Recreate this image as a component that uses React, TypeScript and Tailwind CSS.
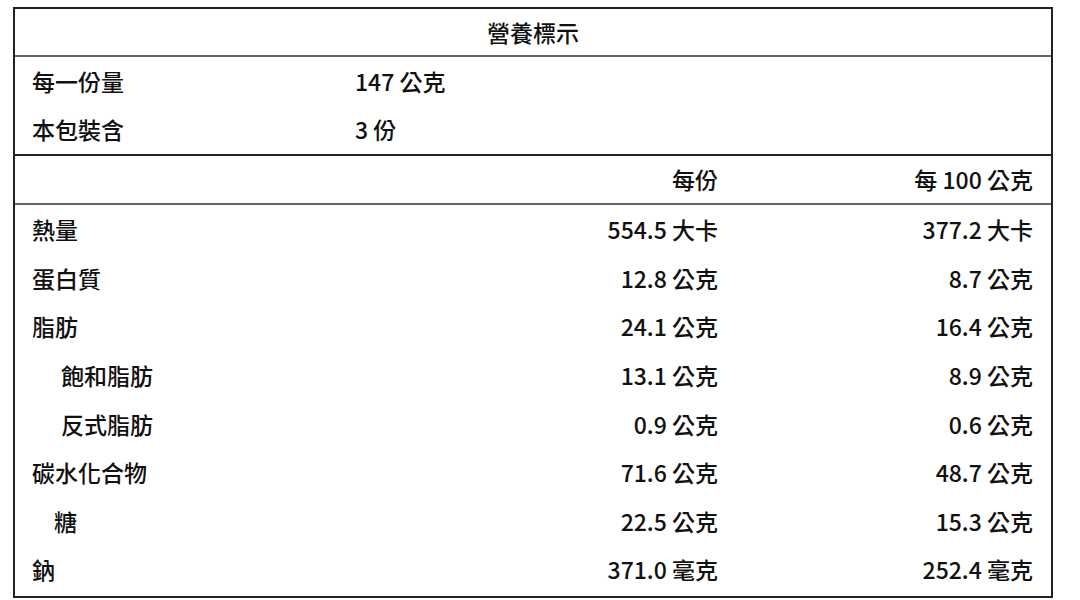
const rows = [
  { name: "熱量", indent: "", a: "554.5 大卡", b: "377.2 大卡" },
  { name: "蛋白質", indent: "", a: "12.8 公克", b: "8.7 公克" },
  { name: "脂肪", indent: "", a: "24.1 公克", b: "16.4 公克" },
  { name: "飽和脂肪", indent: "pl-[46px]", a: "13.1 公克", b: "8.9 公克" },
  { name: "反式脂肪", indent: "pl-[46px]", a: "0.9 公克", b: "0.6 公克" },
  { name: "碳水化合物", indent: "", a: "71.6 公克", b: "48.7 公克" },
  { name: "糖", indent: "pl-[39px]", a: "22.5 公克", b: "15.3 公克" },
  { name: "鈉", indent: "", a: "371.0 毫克", b: "252.4 毫克" },
];

export default function App() {
  return (
    <div
      className="w-[1080px] h-[600px] bg-white pt-[7px] pl-[13px] text-[#111] text-[23px] font-medium"
      style={{ fontFamily: '"Noto Sans CJK TC", sans-serif' }}
    >
      <div className="w-[1040px] h-[591px] border-2 border-[#222] flex flex-col">
        {/* Title */}
        <div className="h-[48px] flex items-center justify-center border-b-2 border-[#666]">
          營養標示
        </div>

        {/* Serving info */}
        <div className="h-[99px] border-b-2 border-[#222] flex flex-col justify-center">
          <div className="grid grid-cols-[340px_1fr] h-[48px] items-center">
            <span className="pl-[17px]">每一份量</span>
            <span>147 公克</span>
          </div>
          <div className="grid grid-cols-[340px_1fr] h-[48px] items-center">
            <span className="pl-[17px]">本包裝含</span>
            <span>3 份</span>
          </div>
        </div>

        {/* Header */}
        <div className="h-[49px] grid grid-cols-[406px_315px_315px] items-center border-b-2 border-[#666]">
          <span />
          <span className="text-right pr-[18px]">每份</span>
          <span className="text-right pr-[18px]">每 100 公克</span>
        </div>

        {/* Nutrients */}
        <div className="flex-1 flex flex-col justify-around pb-[2px]">
          {rows.map((r) => (
            <div
              key={r.name}
              className="h-[48px] grid grid-cols-[406px_315px_315px] items-center"
            >
              <span className={r.indent ? r.indent : "pl-[17px]"}>{r.name}</span>
              <span className="text-right pr-[18px]">{r.a}</span>
              <span className="text-right pr-[18px]">{r.b}</span>
            </div>
          ))}
        </div>
      </div>
    </div>
  );
}
